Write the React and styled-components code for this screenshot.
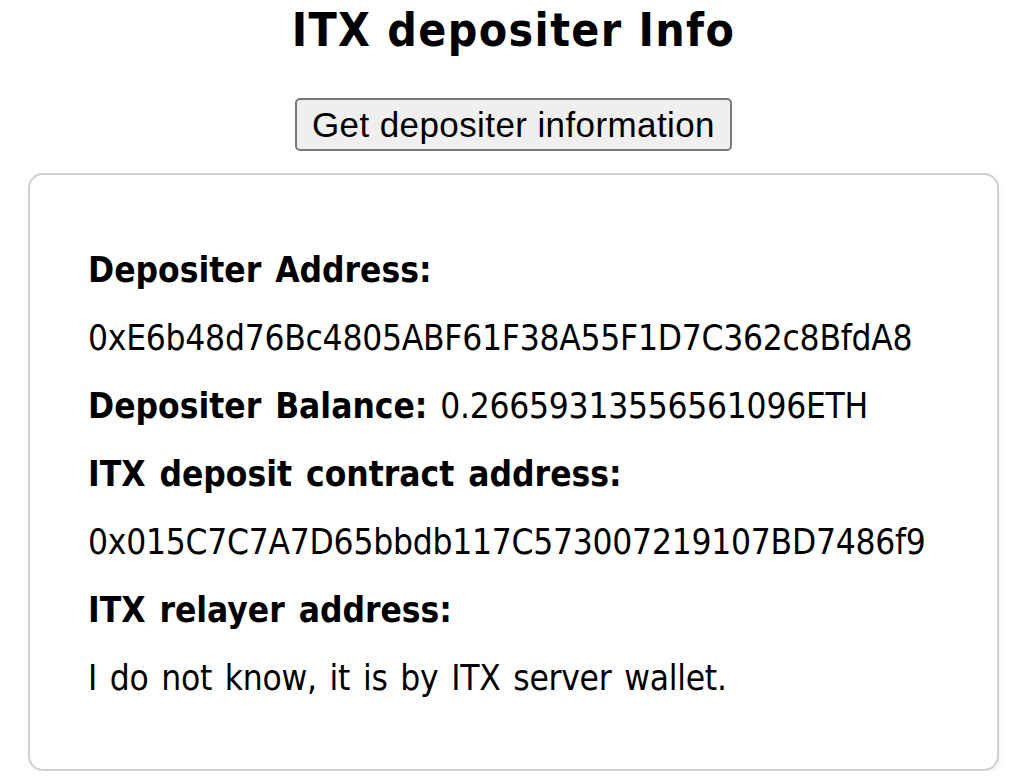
import React from "react";
import styled, { createGlobalStyle } from "styled-components";

const Global = createGlobalStyle`
  html, body { margin: 0; padding: 0; background: #ffffff; }
  body { font-family: "DejaVu Sans Condensed", "DejaVu Sans", sans-serif; color: #000; }
`;

const Page = styled.main`
  display: flex;
  flex-direction: column;
  align-items: center;
  padding: 4px 23px 0 28px;
`;

const Title = styled.h1`
  margin: 0;
  font-size: 46px;
  line-height: 52px;
  font-weight: bold;
  letter-spacing: 1.4px;
  text-align: center;
`;

const ActionRow = styled.div`
  display: flex;
  justify-content: center;
  margin-top: 42px;
`;

const Button = styled.button`
  height: 53px;
  padding: 0 15px;
  font-family: "Liberation Sans", Arial, sans-serif;
  font-size: 35px;
  letter-spacing: 0.4px;
  color: #000;
  background: #efefef;
  border: 2px solid #7a7a7a;
  border-radius: 5px;
`;

const Card = styled.section`
  align-self: stretch;
  margin-top: 22px;
  padding: 61px 58px 57px;
  border: 2px solid #cfcfcf;
  border-radius: 15px;
  box-shadow: 2px 2px 6px rgba(0, 0, 0, 0.06);
`;

const Line = styled.p`
  margin: 0;
  font-size: 35px;
  line-height: 68px;
  letter-spacing: -0.25px;
  word-spacing: 3px;
  white-space: nowrap;
`;

const Label = styled.strong`
  font-weight: bold;
  letter-spacing: 0;
`;

export default function App() {
  return (
    <>
      <Global />
      <Page>
        <Title>ITX depositer Info</Title>
        <ActionRow>
          <Button type="button">Get depositer information</Button>
        </ActionRow>
        <Card>
          <Line><Label>Depositer Address:</Label></Line>
          <Line>0xE6b48d76Bc4805ABF61F38A55F1D7C362c8BfdA8</Line>
          <Line><Label>Depositer Balance:</Label> 0.26659313556561096ETH</Line>
          <Line><Label>ITX deposit contract address:</Label></Line>
          <Line>0x015C7C7A7D65bbdb117C573007219107BD7486f9</Line>
          <Line><Label>ITX relayer address:</Label></Line>
          <Line>I do not know, it is by ITX server wallet.</Line>
        </Card>
      </Page>
    </>
  );
}
